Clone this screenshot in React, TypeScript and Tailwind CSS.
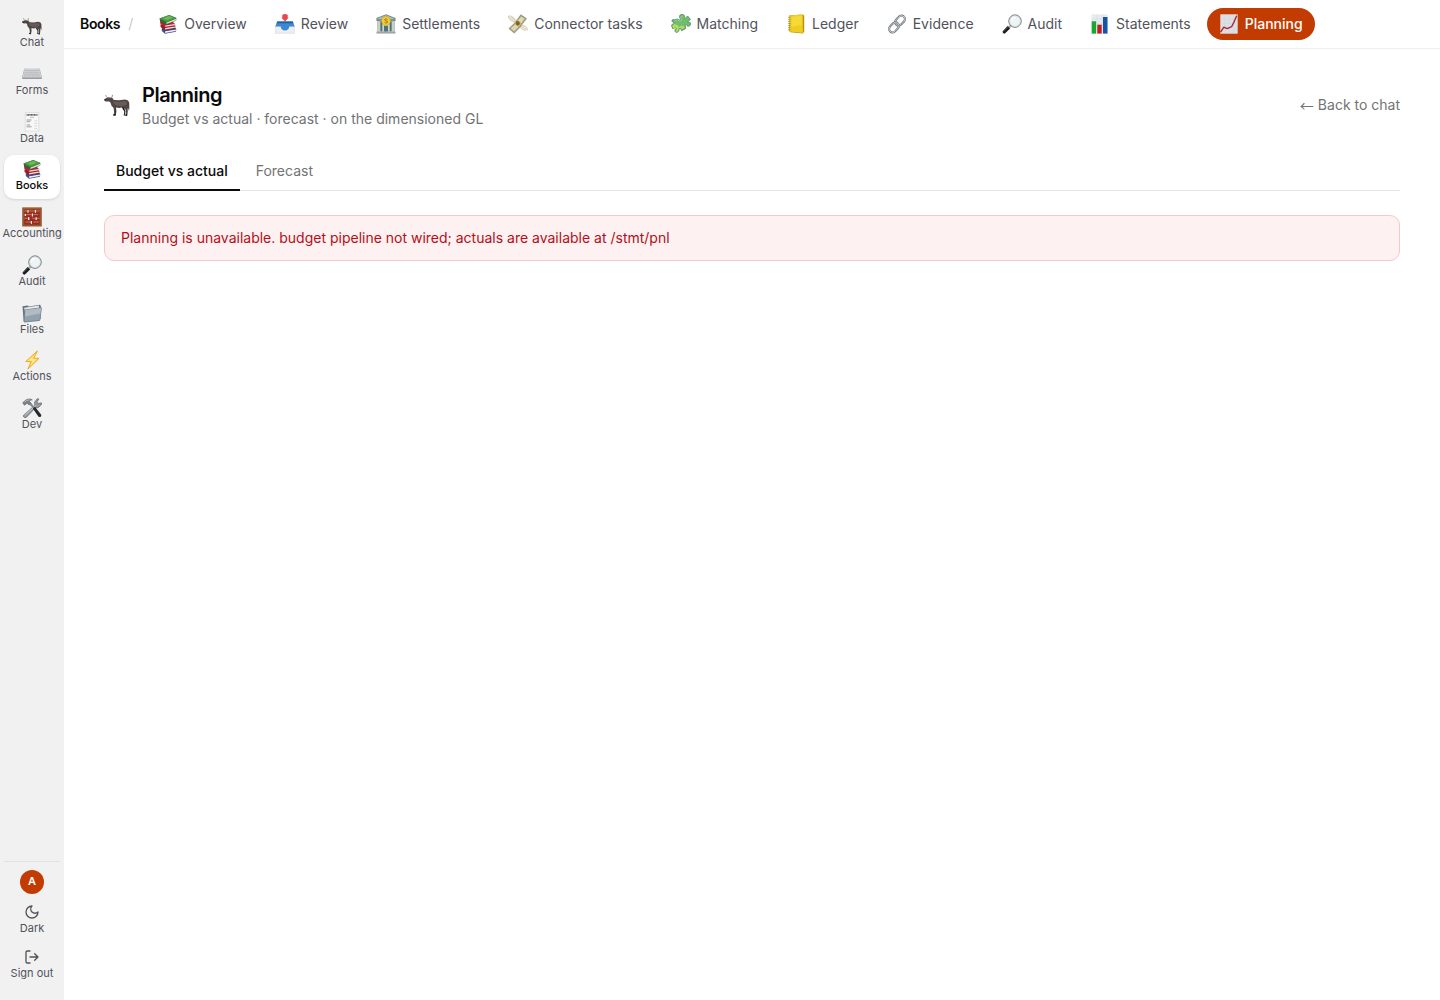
import { useState } from "react";
import type { ReactNode } from "react";

type IconName =
  | "buffalo"
  | "keyboard"
  | "receipt"
  | "books"
  | "abacus"
  | "lens"
  | "folder"
  | "bolt"
  | "tools"
  | "inbox"
  | "bank"
  | "money"
  | "puzzle"
  | "ledger"
  | "link"
  | "bars"
  | "trend";

const railItems: { label: string; icon: IconName }[] = [
  { label: "Chat", icon: "buffalo" },
  { label: "Forms", icon: "keyboard" },
  { label: "Data", icon: "receipt" },
  { label: "Books", icon: "books" },
  { label: "Accounting", icon: "abacus" },
  { label: "Audit", icon: "lens" },
  { label: "Files", icon: "folder" },
  { label: "Actions", icon: "bolt" },
  { label: "Dev", icon: "tools" },
];

const sections: { label: string; icon: IconName }[] = [
  { label: "Overview", icon: "books" },
  { label: "Review", icon: "inbox" },
  { label: "Settlements", icon: "bank" },
  { label: "Connector tasks", icon: "money" },
  { label: "Matching", icon: "puzzle" },
  { label: "Ledger", icon: "ledger" },
  { label: "Evidence", icon: "link" },
  { label: "Audit", icon: "lens" },
  { label: "Statements", icon: "bars" },
  { label: "Planning", icon: "trend" },
];

const tabs = ["Budget vs actual", "Forecast"];

export default function App() {
  const [tab, setTab] = useState(tabs[0]);

  return (
    <div className="flex min-h-screen bg-white font-['Inter',sans-serif] text-sm text-[#0a0a0a]">
      <Rail />

      <div className="flex min-w-0 flex-1 flex-col">
        {/* SECTION BAR */}
        <header className="flex items-center border-b border-[#eeeeee] px-4 py-2">
          <span className="font-semibold tracking-tight">Books</span>
          <span className="mx-2 text-[#c8c8cc]">/</span>
          <nav aria-label="Books" className="ml-[5px] flex items-center gap-1">
            {sections.map((s) => (
              <a
                key={s.label}
                href="#"
                className={
                  s.label === "Planning"
                    ? "flex h-8 items-center gap-1.5 rounded-full bg-[#c23b00] px-3 font-medium whitespace-nowrap text-white"
                    : "flex h-8 items-center gap-1.5 rounded-full px-3 whitespace-nowrap text-[#52525b]"
                }
              >
                <Icon name={s.icon} className="size-5 shrink-0" />
                {s.label}
              </a>
            ))}
          </nav>
        </header>

        <main className="px-10 py-8">
          {/* HEADER */}
          <div className="flex items-center justify-between">
            <div className="flex items-center gap-3">
              <Icon name="buffalo" className="size-[26px] shrink-0" />
              <div>
                <h1 className="text-xl font-semibold tracking-tight">Planning</h1>
                <p className="text-[#737373]">
                  Budget vs actual · forecast · on the dimensioned GL
                </p>
              </div>
            </div>
            <a href="#" className="flex items-center gap-1 text-[#737373]">
              <span className="font-['Noto_Sans_CJK_SC',sans-serif] leading-5">←</span>
              Back to chat
            </a>
          </div>

          {/* TABS */}
          <div role="tablist" className="mt-6 flex gap-1 border-b border-[#e5e5e5]">
            {tabs.map((t) => (
              <button
                key={t}
                type="button"
                role="tab"
                aria-selected={t === tab}
                onClick={() => setTab(t)}
                className={
                  t === tab
                    ? "-mb-px border-b-2 border-[#0a0a0a] px-3 py-2 font-medium"
                    : "-mb-px border-b-2 border-transparent px-3 py-2 text-[#737373]"
                }
              >
                {t}
              </button>
            ))}
          </div>

          {/* ERROR */}
          <div
            role="alert"
            className="mt-6 rounded-[10px] border border-[#f5c8cb] bg-[#fdf1f1] px-4 py-3 text-[#b80d18]"
          >
            Planning is unavailable. budget pipeline not wired; actuals are available at /stmt/pnl
          </div>
        </main>
      </div>
    </div>
  );
}

function Rail() {
  return (
    <aside className="flex w-16 shrink-0 flex-col justify-between bg-[#f1f1f1] px-1 pt-3 pb-[15px] text-[11px] leading-tight text-[#52525b]">
      <nav aria-label="Main" className="flex flex-col gap-1">
        {railItems.map((item) => (
          <a
            key={item.label}
            href="#"
            className={
              item.label === "Books"
                ? "flex flex-col items-center rounded-[10px] bg-white pt-1 pb-1.5 font-medium text-[#0a0a0a] shadow-sm"
                : "flex flex-col items-center rounded-[10px] pt-1 pb-1.5"
            }
          >
            <Icon name={item.icon} className="size-5" />
            {item.label}
          </a>
        ))}
      </nav>

      <div className="flex flex-col items-center border-t border-[#e2e2e2] pt-2">
        <div className="flex size-6 items-center justify-center rounded-full bg-[#c23b00] font-semibold text-white">
          A
        </div>
        <button type="button" className="flex w-full flex-col items-center gap-0.5 pt-2.5 pb-1">
          <svg viewBox="0 0 24 24" className="size-4" fill="none" stroke="currentColor" strokeWidth="2" strokeLinecap="round" strokeLinejoin="round">
            <path d="M12 3a6 6 0 0 0 9 9 9 9 0 1 1-9-9Z" />
          </svg>
          Dark
        </button>
        <button type="button" className="flex w-full flex-col items-center gap-0.5 pt-2.5 pb-1">
          <svg viewBox="0 0 24 24" className="size-4" fill="none" stroke="currentColor" strokeWidth="2" strokeLinecap="round" strokeLinejoin="round">
            <path d="M9 21H5a2 2 0 0 1-2-2V5a2 2 0 0 1 2-2h4M16 17l5-5-5-5M21 12H9" />
          </svg>
          Sign out
        </button>
      </div>
    </aside>
  );
}

function Icon({ name, className }: { name: IconName; className: string }) {
  return (
    <svg viewBox="0 0 20 20" className={className} aria-hidden="true">
      {drawings[name]}
    </svg>
  );
}

const drawings: Record<IconName, ReactNode> = {
  buffalo: (
    <g>
      <path d="M9.2 11.500 9.500 15l-.4 2.600h-1l.3-2.900-.4-3.200Zm6 -.2 1.300 3.300-.2 2.800h-.9l.1-2.600-2-3Z" fill="#2a2324" />
      <path d="m.3 5.600 1.900-1.200 1.600-.3 1.700.7L8 6.200l3.700.2 4.500-.6 2.300.8.900 1.700.1 4.800-.5 1.300-.4-2.100-.4.4.1 2.100-.4 3.600-1.300.1.400-2.400-.2-2.300-1.900-2.200-3 .8-2.600-.5-.4 2.200-.1 3.800-1.200.2.2-2.600-.4-3.100-1.700-2-.7-2.300-1-.8-2 .1-1.300-.3Z" fill="#4e4544" />
      <path d="m6.700 7.100 4.600.5 4.800-.7 1.500.8-.2 2.300-3.600 1-4.400-.6-1.900-1.400Z" fill="#655b59" />
      <path d="M3.800 4.400C2.600 4.400 1.500 3.800 1.400 2.700m3.100 1.800c1.500.1 2.200-.8 2-2" fill="none" stroke="#8d8380" strokeWidth=".7" strokeLinecap="round" />
      <path d="m4.900 5 2.100-.5-.8 1.200Z" fill="#37302f" />
      <path d="m.3 5.600.8-.4.300 1.500-.8.100Z" fill="#241f1f" />
      <path d="m7.100 17.200 1.100-.1-.2 1H6.800Zm9.400.1 1.100-.1-.2 1h-1.100Zm-8.500.1h1.100l-.2.800H7.900Zm7.300-.2h1l-.2.900h-1Z" fill="#1c1718" />
    </g>
  ),
  keyboard: (
    <g>
      <path d="M2.300 4.800h15.400l2.300 9-.5 1.200H.5L0 13.800Z" fill="#999b9e" />
      <path d="M2.500 5h15l2.100 8.600H.4Z" fill="#d3d5d7" />
      <path d="M3 6.500h14M2.700 8.300h14.600M2.200 10.200h15.600M1.800 12h16.400" stroke="#a9abae" strokeWidth=".8" strokeDasharray="1.300 .3" />
    </g>
  ),
  receipt: (
    <g>
      <path d="M3.200.6h13.600v18.800l-1.100-.7-1.200.7-1.100-.7-1.200.7-1.100-.7-1.200.7-1.100-.7-1.200.7-1.100-.7-1.200.7-1.100-.7-1 .7Z" fill="#f8f8f8" stroke="#cacaca" strokeWidth=".5" />
      <path d="M4.500 2.800h11" stroke="#666" strokeWidth="1.800" strokeDasharray="1.200 .3" />
      <path d="M8 5.400h4" stroke="#999" strokeWidth=".6" />
      <path d="M4.600 8h5m-5 1.700h3.600M4.600 13h3.600m-3.600 1.800h5" stroke="#777" strokeWidth=".7" />
      <path d="M12.500 8.900h2.700m-2.700 2.500h2.700m-2.700 2.600h2.700m-2.700 2.600h2.700" stroke="#c1c1c1" strokeWidth=".6" />
    </g>
  ),
  books: (
    <g>
      <path d="m3.700 14.200 11.600-1.800 3 2.900-.4 2.500-10.900 2-3.200-2.700Z" fill="#3f4e8b" />
      <path d="m7.100 17.200 10.900-1.800-.2 1.700-10.600 1.800Z" fill="#efeff3" />
      <path d="m3.700 14.200 11.600-1.800 3 2.600-11.200 2.100Z" fill="#394a8b" />
      <path d="m2.400 10.500 10.900-1.200 4.100 2.700-.2 2.400-10.200 1.800-4.400-3.300Z" fill="#9b1c28" />
      <path d="m7.200 14.100 9.700-1.500v1.200l-9.800 1.700Z" fill="#eee3e3" />
      <path d="m2 6.500 12 .5 3.200 3.200-.2 1.700-9.700 1.500L2.300 9.700Z" fill="#b32530" />
      <path d="m7.200 11.600 9.700-1.500.1 1.200-9.700 1.500Z" fill="#e8dedf" />
      <path d="m1.500 4.600 9.700-3.700L18.400 4l-.3 2.800-9.900 3.800-6.100-3.300Z" fill="#266d31" />
      <path d="m8.600 8.400 9.300-3.700.1 1.700-9.600 3.600Z" fill="#d7dfd0" />
      <path d="m1.500 4.500 9.700-3.600L18.400 4 8.500 8Z" fill="#4d9b40" />
      <path d="m5.200 4.300 5.900-2.200 3.800 1.600-6 2.300Z" fill="#70b85a" />
    </g>
  ),
  abacus: (
    <g>
      <rect x=".2" y=".4" width="19.600" height="19.200" rx=".6" fill="#925a30" />
      <rect x="2.300" y="2.500" width="15.400" height="15.200" fill="#982b20" />
      <path d="M2.400 4h2.700m1.600 0h5.600m2.200 0h3.100M4.500 7.600h4.800m2.100 0h4.800M2.400 11.300h3.200m4.600 0h3.100m1.600 0h2.700M3.600 15h4.800m3 0h5.500" stroke="#dc8a69" strokeWidth=".8" />
      <path d="M5.400 3h1.200v2.800H5.400Zm7.400 0h1.300v2.800h-1.300Zm-3 3.600H11v2.900H9.800ZM6 10.200h1.400V13H6Zm7.500.1h1.300v2.800h-1.300ZM8.700 14H10v2.800H8.700ZM2.700 6.900h1.400v2.200H2.700Z" fill="#f4ece5" />
      <path d="M.3.800h19.400" stroke="#b27b49" strokeWidth=".7" />
    </g>
  ),
  lens: (
    <g>
      <path d="m7.900 10.800 1.600 1.600-1.800 1.800-1.800-1.600Z" fill="#a5aaae" />
      <path d="m5.600 12.100 2.500 2.300-4.900 4.900c-.7.6-1.400.4-2-.2-.8-.7-.8-1.400-.2-2.100Z" fill="#1b1d1e" />
      <path d="m5.800 13-4.200 4.400" stroke="#55595c" strokeWidth=".7" />
      <circle cx="13" cy="7.100" r="6.200" fill="#f0f5f6" stroke="#5c5f61" strokeWidth=".9" />
      <circle cx="13" cy="7.100" r="5.300" fill="#edf4f6" stroke="#ccd2d4" strokeWidth=".6" />
      <path d="M9.500 6.600c.4-1.900 1.700-3 3.500-3.200" fill="none" stroke="#fff" strokeWidth="1.100" strokeLinecap="round" />
    </g>
  ),
  folder: (
    <g>
      <path d="m.5 3.300 5.200-.8 1 1 11.300-1.800.8 1-.2 13.300L1.600 18.200Z" fill="#65737f" />
      <path d="M2.200 4.800 17 2.600v3L2.800 8Z" fill="#e5e9eb" />
      <path d="m2.800 6.500 16.500-2.200.6.600-1.700 12.300-.8.800-15 1.500-.8-.8Z" fill="#768591" />
      <path d="m3.400 7.100 15.600-2-1.500 11.800-14.900 1.500Z" fill="#94a1ac" />
      <path d="m3.400 7.100 15.600-2-.7 5.300-15.300 3Z" fill="#b0bbc4" />
    </g>
  ),
  bolt: (
    <g>
      <path d="M15.500.9 3.700 11.500l5.400.1-3.200 7.500L17 8.400l-5.200-.2Z" fill="#fbd75e" stroke="#edac27" strokeWidth="1" strokeLinejoin="round" />
      <path d="m13.300 4.200-7.500 6.500 5 .1-2.200 4.600 5.900-6.200-4.400-.1Z" fill="#ffe991" />
    </g>
  ),
  tools: (
    <g>
      <path d="M1.600 17.200 12.700 7.400 12.600 4l2.600-3.200 1.700.1-1.700 2.900 1.200 1.800 3-.8.100 1.700-3.100 3.100-3 .2L4.300 19.400c-1.700.9-3.800-.9-2.700-2.200Z" fill="#949a9f" stroke="#54585c" strokeWidth=".6" />
      <path d="m2.900 17.300 11-9.800" stroke="#dce0e2" strokeWidth=".8" />
      <path d="m7.300 6.200 1.800-1.300 3.700 4.300-1.800 1.300Z" fill="#858b90" />
      <path d="m10.800 10.500 2.200-1.800 6 7.700c1 1.800-1 3.600-2.600 2.200Z" fill="#27292b" />
      <path d="m.7 4.700 3.500-3C6.500.6 8.700.7 10.400 2c-1.700 0-2.800.5-3.100 1.500l1.900 1.600-2 2-1.800-1.500-1.100.2-1.900 1.500Z" fill="#7b8186" stroke="#505458" strokeWidth=".5" />
      <path d="m2.700 4 2.200-1.700 2.900-.5" fill="none" stroke="#c4c8cb" strokeWidth=".8" />
    </g>
  ),
  inbox: (
    <g>
      <path d="M.4 12h19.200v7.300H.4Z" fill="#edeef0" stroke="#cfd1d4" strokeWidth=".5" />
      <path d="M2.200 7.500h15.600l1.900 5h-5.400c-.2 2.700-2 4-4.300 4s-4.100-1.300-4.300-4H.3Z" fill="#3d88d2" />
      <path d="M2.200 7.500h15.600l.7 1.700h-17Z" fill="#225f9d" />
      <path d="M7.300 1.100Q10-1.100 12.700 1.100v2.500h1L10 7.500 6.300 3.600h1Z" fill="#e8484b" />
    </g>
  ),
  bank: (
    <g>
      <path d="M1.200 5.500h17.600v13H1.200Z" fill="#adb8ac" />
      <path d="M10 .3.400 4v3h19.200V4Z" fill="#768e8c" />
      <path d="M10 1.200 2.200 4.300v1h15.600v-1Z" fill="#adbab0" />
      <path d="M4.500 7.600h1.900v10H4.500Zm9.100 0h1.900v10h-1.900ZM7.800 12h4.400v6H7.800Z" fill="#4f7178" />
      <path d="M3 7.500v10m4.200-10v10m5.600-10v10M17 7.500v10" stroke="#dce0d5" strokeWidth="1.200" />
      <path d="M.5 17.600h19v1.900H.5Z" fill="#8e9b96" />
      <path d="M1 17.900h18" stroke="#ced4cb" strokeWidth=".6" />
      <circle cx="10" cy="6.900" r="4.400" fill="#f5cc32" stroke="#c99e18" strokeWidth=".5" />
      <path d="M11.400 5.400c-.8-.8-2.700-.6-2.700.5 0 1.300 2.900.6 2.900 2 0 1.300-2.100 1.400-3 .5" fill="none" stroke="#735e20" strokeWidth=".8" />
    </g>
  ),
  money: (
    <g>
      <path d="M7.700 6.700C6.500 3.500 3.500 1.500.4 2c.2 3.100 2.300 5.200 5.700 5.800Zm5.500 5.200c3.600-1 5.800.8 6.400 3.800-3 1.200-6 .1-7.500-2.700Z" fill="#eee9d8" stroke="#bdb7a2" strokeWidth=".6" />
      <path d="m1.800 3.200 4.700 3.300M3.600 2.600 7 5.900m6.200 6.700 5 2.400" stroke="#c8c2af" strokeWidth=".5" />
      <path d="M.9 14.500C5.700 11 8.800 6.100 12.800.8l5.700 3.800c-4.500 5.700-7.400 10.500-12.300 14.500Z" fill="#a8a27c" stroke="#706e57" strokeWidth=".5" />
      <path d="M2.600 14.300C7.300 10.600 9.500 7 13.100 2.400l3.500 2.300c-3.800 5-6.300 9.200-10.500 12.500Z" fill="#ded8b5" />
      <path d="m6.200 9.500 2.700-3.600 4.500 3-2.800 4Z" fill="#dab34f" />
      <ellipse cx="9.700" cy="9.200" rx="2" ry="2.300" fill="#77673b" />
    </g>
  ),
  puzzle: (
    <g>
      <path d="M3.200 5.800 6.500 5l2.100 1c1 .2 1.300-.7.600-1.400C7.700 3 8.600.5 10.800.3c2.200-.1 3.200 1.500 2.700 3-.2.900.6 1.300 1.200.7L16.600 2l2.800 3.300-2.100 2.200c-.6.700-.1 1.300.7 1 1.500-.4 2.200.8 1.500 2.200-.9 1.900-2.800 2-3.700.7-.7-1.100-1.500-1-1.600-.1l.5 3.200-4.100 2.300-.9-2c-.5-1-1.500-.8-1.500.2-.1 2.300-1.400 3.900-3.200 3.200-1.600-.6-1.500-2.200-.3-3.100.8-.7.300-1.400-.7-1.200l-2.500.6L.5 11l2.200-1.500c.7-.6.400-1.100-.4-1.200C.5 8 .5 5.900 2 5.500Z" fill="#70bd6d" stroke="#427e51" strokeWidth=".7" />
      <path d="m1.400 11.500 2.300-1.400 3 1.200 1.700 1.600 2-1.500 3.200 1.400-.1 1-2.800 1.500-.8-1.400c-1.700-.6-2.500.5-2.600 1.500-.2 2-1.100 2.800-2.100 2.300-1-.4-.7-1.300.3-2 .9-1 .1-2.400-1.500-2.100l-1.900.6Z" fill="#b4dc62" />
      <path d="m3.700 6.500 2.800-.7 2 1c1.700.6 2.800-.8 1.700-2.200-.8-1 .5-3.100 1.800-2.600" fill="none" stroke="#9bd5ab" strokeWidth=".8" />
    </g>
  ),
  ledger: (
    <g>
      <path d="m3 1.500 13.700-.9 1.500 1v16.300l-1.500 1.500-12.300-1.100L3 16.500Z" fill="#b9920b" />
      <path d="m3 1.600 13.700-1 .2 18.400-13.300-1.600Z" fill="#efcc24" />
      <path d="m5.700 2.700 10.100-.7.200 8.700-10.300 2Z" fill="#f5d937" />
      <path d="M2 3.200h2.600M2 5.300h2.600M2 7.400h2.600M2 9.500h2.600M2 11.600h2.600M2 13.700h2.600M2 15.800h2.600" stroke="#9b883f" strokeWidth=".7" />
    </g>
  ),
  link: (
    <g fill="none" strokeLinecap="round">
      <rect x="9.500" y="1" width="7" height="11.200" rx="3.500" transform="rotate(43 13 6.600)" stroke="#656b70" strokeWidth="2" />
      <rect x="9.500" y="1" width="7" height="11.200" rx="3.500" transform="rotate(43 13 6.600)" stroke="#cdd3d6" strokeWidth=".9" />
      <rect x="3.500" y="7.800" width="7" height="11.200" rx="3.500" transform="rotate(43 7 13.400)" stroke="#656b70" strokeWidth="2" />
      <rect x="3.500" y="7.800" width="7" height="11.200" rx="3.500" transform="rotate(43 7 13.400)" stroke="#d1d6d9" strokeWidth=".9" />
    </g>
  ),
  bars: (
    <g>
      <path d="M1.500.4h16v19h-16Z" fill="#e5ebef" />
      <path d="M1.500 5h16m-16 5h16m-16 5h16M7 .4v19M12.300.4v19" stroke="#d2dade" strokeWidth=".5" />
      <path d="M1.700 7.300h4.400v12.300H1.700Z" fill="#13aa2d" />
      <path d="M7.300 10.700h4.400v8.900H7.300Z" fill="#c21d24" />
      <path d="M13 3h4.500v16.600H13Z" fill="#1653a4" />
    </g>
  ),
  trend: (
    <g>
      <path d="M1.300.3h17.400v19.400H1.300Z" fill="#dce0e5" />
      <path d="M1.300 5h17.400M1.300 9.700h17.400M1.300 14.400h17.400M5.600.3v19.400M10 .3v19.400M14.400.3v19.400" stroke="#d0d5da" strokeWidth=".5" />
      <path d="m1.600 18.200 3.200-5.100 3.400 1.500 4.400-1.900 2.100-4.100 3-6.800" fill="none" stroke="#ac2636" strokeWidth="1.400" strokeLinejoin="round" />
    </g>
  ),
};
